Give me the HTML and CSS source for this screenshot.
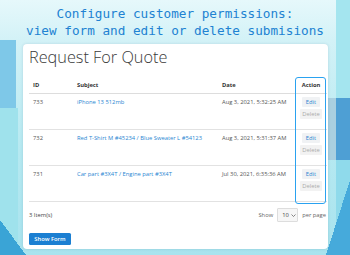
FILE: index.html
```html
<!DOCTYPE html>
<html>
<head>
<meta charset="utf-8">
<link rel="stylesheet" href="styles.css">
</head>
<body>
<div class="banner">Configure customer permissions:<br>view form and edit or delete submisions</div>
<div class="card">
  <h1 class="title">Request For Quote</h1>
  <div class="table">
    <div class="row head">
      <div class="c">ID</div>
      <div class="c">Subject</div>
      <div class="c">Date</div>
      <div class="c act">Action</div>
    </div>
    <div class="row">
      <div class="c">733</div>
      <div class="c link">iPhone 13 512mb</div>
      <div class="c">Aug 3, 2021, 5:32:25 AM</div>
      <div class="c act"><span class="btn edit">Edit</span><span class="btn del">Delete</span></div>
    </div>
    <div class="row">
      <div class="c">732</div>
      <div class="c link">Red T-Shirt M #45234 / Blue Sweater L #54123</div>
      <div class="c">Aug 3, 2021, 5:31:37 AM</div>
      <div class="c act"><span class="btn edit">Edit</span><span class="btn del">Delete</span></div>
    </div>
    <div class="row">
      <div class="c">731</div>
      <div class="c link">Car part #3X4T / Engine part #3X4T</div>
      <div class="c">Jul 30, 2021, 6:35:36 AM</div>
      <div class="c act"><span class="btn edit">Edit</span><span class="btn del">Delete</span></div>
    </div>
    <div class="highlight"></div>
  </div>
  <div class="footer">
    <span class="count">3 Item(s)</span>
    <div class="pager">
      <span>Show</span>
      <span class="select">10 <svg width="5" height="3" viewBox="0 0 5 3"><path d="M0.5 0.5 L2.5 2.5 L4.5 0.5" fill="none" stroke="#555" stroke-width="0.7"/></svg></span>
      <span>per page</span>
    </div>
  </div>
  <span class="primary">Show Form</span>
</div>
</body>
</html>
```
FILE: styles.css
```css
html, body {
  margin: 0;
  width: 350px;
  height: 255px;
  overflow: hidden;
}
body {
  font-family: "Open Sans", "Liberation Sans", sans-serif;
  background:
    linear-gradient(#7ec8e8, #7ec8e8) 0 40px / 16px 68px no-repeat,
    linear-gradient(#4e9fd4, #4e9fd4) 336px 98px / 14px 62px no-repeat,
    linear-gradient(#a9cfe0, #a9cfe0) 328px 98px / 8px 62px no-repeat,
    linear-gradient(to top right, #3aa4d6 50%, transparent 50%) 0 220px / 26px 35px no-repeat,
    linear-gradient(to bottom right, transparent 50%, #46aadb 50%) 326px 180px / 24px 75px no-repeat,
    linear-gradient(#9fe2ec, #9fe2ec) 0 108px / 18px 147px no-repeat,
    linear-gradient(#a4e5ef, #a4e5ef) 336px 0 / 14px 98px no-repeat,
    linear-gradient(#8fdaeb, #8fdaeb) 336px 160px / 14px 95px no-repeat,
    linear-gradient(180deg, #e6f8fb 0, #d3f2f7 40px, #b6e9f1 150px, #a8e3ee 255px);
}
.banner {
  font-family: "DejaVu Sans Mono", monospace;
  font-size: 12.7px;
  line-height: 17px;
  color: #2182d2;
  text-align: center;
  padding-top: 4.5px;
  height: 39.5px;
}
.card {
  margin-left: 23px;
  width: 299px;
  height: 205px;
  background: #fff;
  border-radius: 4px;
  padding: 0 0 0 6px;
  box-shadow: 0 0 3px rgba(0, 60, 100, 0.15);
  position: relative;
}
.title {
  margin: 0;
  font-weight: 300;
  font-size: 16.3px;
  line-height: 24px;
  padding-top: 1px;
  color: #3a3a3a;
  height: 31px;
}
.table {
  position: relative;
  width: 298px;
}
.row {
  display: grid;
  grid-template-columns: 44px 145px 77px 32px;
  height: 35px;
  border-bottom: 1px solid #e2e2e2;
  font-size: 5.8px;
  line-height: 8px;
  color: #555;
}
.row.head {
  height: 17px;
  font-weight: 700;
  color: #333;
  align-items: center;
  border-bottom: 1px solid #ddd;
}
.c {
  padding-left: 4px;
  padding-top: 4px;
  white-space: nowrap;
}
.head .c { padding-top: 0; }
.link { color: #2a86d2; }
.c.act {
  padding-left: 0;
  display: flex;
  flex-direction: column;
  align-items: center;
  gap: 2px;
  padding-top: 3px;
}
.head .c.act { padding-top: 0; }
.btn {
  display: block;
  padding: 0 2px;
  line-height: 10px;
  background: #f0f2f4;
  border-radius: 1px;
}
.btn.edit { color: #2a86d2; padding: 0 4px; }
.btn.del { color: #aaa; background: #f2f2f2; }
.highlight {
  position: absolute;
  left: 266px;
  top: 1px;
  width: 29px;
  height: 125px;
  border: 1.5px solid #2aa2f0;
  border-radius: 3px;
}
.footer {
  display: flex;
  justify-content: space-between;
  align-items: center;
  height: 22px;
  margin-top: 2px;
  width: 297px;
  font-size: 5.8px;
  color: #444;
}
.pager {
  display: flex;
  align-items: center;
  gap: 4px;
  color: #666;
}
.select {
  display: inline-flex;
  align-items: center;
  gap: 2px;
  width: 21px;
  height: 14px;
  box-sizing: border-box;
  padding-left: 4px;
  border: 1px solid #ddd;
  background: #f6f6f6;
  border-radius: 1px;
  color: #444;
}
.primary {
  display: block;
  margin-top: 7px;
  width: 42px;
  height: 12px;
  line-height: 12px;
  text-align: center;
  background: #1b7fd2;
  color: #fff;
  font-size: 5.8px;
  font-weight: 600;
  border-radius: 1.5px;
}
```
